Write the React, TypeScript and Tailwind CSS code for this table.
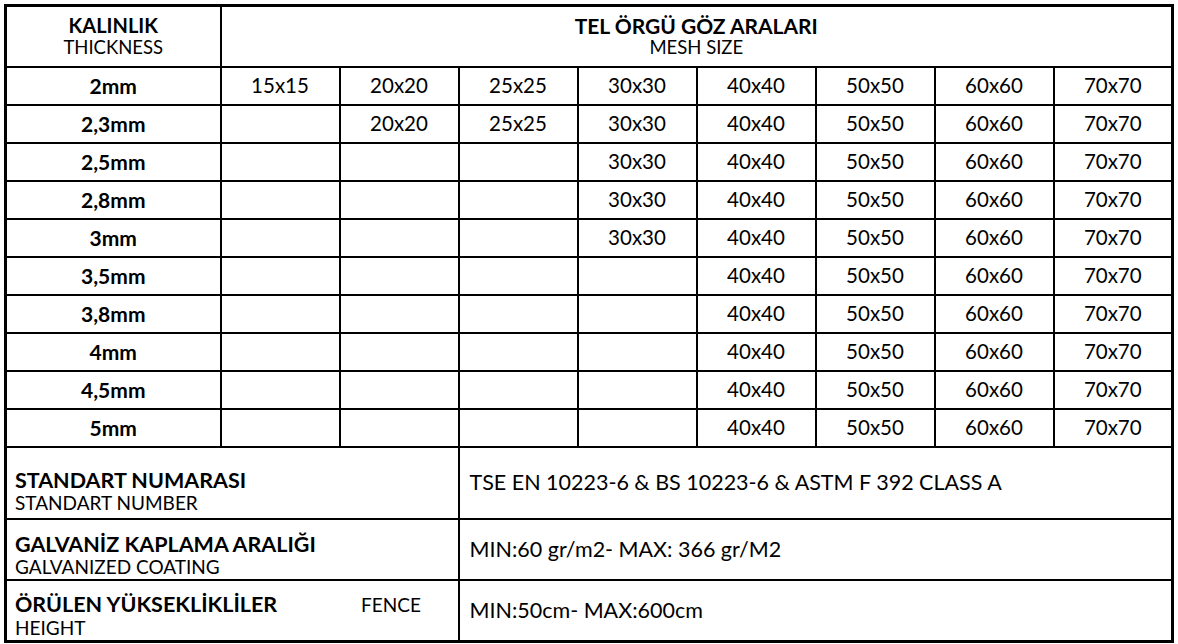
const sizes = ['15x15', '20x20', '25x25', '30x30', '40x40', '50x50', '60x60', '70x70'];

// index of the first size each thickness has
const rows: [string, number][] = [
  ['2mm', 0],
  ['2,3mm', 1],
  ['2,5mm', 3],
  ['2,8mm', 3],
  ['3mm', 3],
  ['3,5mm', 4],
  ['3,8mm', 4],
  ['4mm', 4],
  ['4,5mm', 4],
  ['5mm', 4],
];

const cell = 'border-2 border-black text-center align-middle p-0';

export default function App() {
  return (
    <div className="bg-white w-[1178px] h-[644px] pt-[4px] pl-[4px] text-black" style={{ fontFamily: 'Lato, "Open Sans", sans-serif' }}>
      <table className="border-collapse border-[3px] border-black table-fixed w-[1169px]">
        <colgroup>
          <col className="w-[215px]" />
          {sizes.map(s => (
            <col key={s} className="w-[119px]" />
          ))}
        </colgroup>
        <tbody>
          <tr className="h-[61px]">
            <td className={cell}>
              <div className="font-bold text-[20px] leading-[23px]">KALINLIK</div>
              <div className="text-[18.5px] leading-[21px]">THICKNESS</div>
            </td>
            <td className={cell} colSpan={8}>
              <div className="font-bold text-[21px] leading-[23px]">TEL ÖRGÜ GÖZ ARALARI</div>
              <div className="text-[18.5px] leading-[21px]">MESH SIZE</div>
            </td>
          </tr>
          {rows.map(([t, from]) => (
            <tr key={t} className="h-[38px]">
              <td className={`${cell} font-bold text-[21px]`}>{t}</td>
              {sizes.map((s, i) => (
                <td key={s} className={`${cell} text-[20.5px]`}>
                  {i >= from ? s : ''}
                </td>
              ))}
            </tr>
          ))}
          <tr className="h-[72px]">
            <td className="border-2 border-black align-bottom px-[8px] pb-[4px]" colSpan={3}>
              <div className="font-bold text-[21.5px] leading-[24px]">STANDART NUMARASI</div>
              <div className="text-[19px] leading-[22px]">STANDART NUMBER</div>
            </td>
            <td className="border-2 border-black align-middle px-[10px] text-[21.5px]" colSpan={6}>
              TSE EN 10223-6 &amp; BS 10223-6 &amp; ASTM F 392 CLASS A
            </td>
          </tr>
          <tr className="h-[61px]">
            <td className="border-2 border-black align-bottom px-[8px] pb-[1px]" colSpan={3}>
              <div className="font-bold text-[21.5px] leading-[24px]">GALVANİZ KAPLAMA ARALIĞI</div>
              <div className="text-[19px] leading-[22px]">GALVANIZED COATING</div>
            </td>
            <td className="border-2 border-black align-middle px-[10px] text-[21.5px]" colSpan={6}>
              MIN:60 gr/m2- MAX: 366 gr/M2
            </td>
          </tr>
          <tr className="h-[62px]">
            <td className="border-2 border-black align-bottom px-[8px] pb-[1px]" colSpan={3}>
              <div className="flex items-baseline">
                <span className="font-bold text-[21.5px] leading-[24px] w-[346px] shrink-0">ÖRÜLEN YÜKSEKLİKLİLER</span>
                <span className="text-[19px] leading-[24px]">FENCE</span>
              </div>
              <div className="text-[19px] leading-[22px]">HEIGHT</div>
            </td>
            <td className="border-2 border-black align-middle px-[10px] text-[21.5px]" colSpan={6}>
              MIN:50cm- MAX:600cm
            </td>
          </tr>
        </tbody>
      </table>
    </div>
  );
}
